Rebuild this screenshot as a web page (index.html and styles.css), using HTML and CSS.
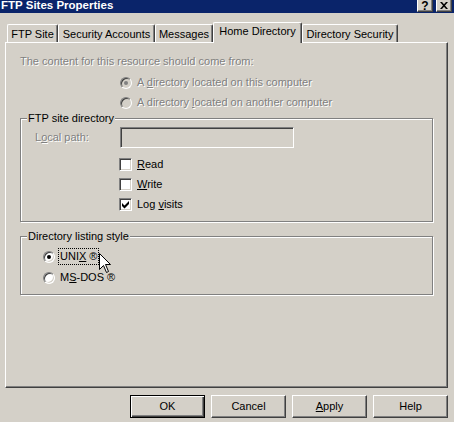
FILE: index.html
```html
<!DOCTYPE html>
<html>
<head>
<meta charset="utf-8">
<link rel="stylesheet" href="styles.css">
</head>
<body>
<div class="titlebar">
  <span class="title">FTP Sites Properties</span>
  <div class="caption-btns">
    <span class="cap-btn cap-help">?</span>
    <span class="cap-btn cap-close"><svg width="8" height="7" viewBox="0 0 8 7"><path d="M0 0h2l2 2.2L6 0h2L5 3.5 8 7H6L4 4.8 2 7H0l3-3.5z" fill="#000"/></svg></span>
  </div>
</div>

<div class="tabs">
  <div class="tab tab-ftp">FTP Site</div>
  <div class="tab tab-sec">Security Accounts</div>
  <div class="tab tab-msg">Messages</div>
  <div class="tab tab-home selected">Home Directory</div>
  <div class="tab tab-dirsec">Directory Security</div>
</div>

<div class="panel">
  <div class="intro disabled">The content for this resource should come from:</div>
  <div class="src-rows">
    <div class="opt-row src">
      <span class="radio radio-disabled checked"></span>
      <span class="opt-label disabled">A <u>d</u>irectory located on this computer</span>
    </div>
    <div class="opt-row src">
      <span class="radio radio-disabled"></span>
      <span class="opt-label disabled">A directory <u>l</u>ocated on another computer</span>
    </div>
  </div>

  <div class="group group-ftp">
    <div class="group-title">FTP site directory</div>
    <div class="path-row">
      <span class="path-label disabled">L<u>o</u>cal path:</span>
      <span class="textbox"></span>
    </div>
    <div class="checks">
      <div class="opt-row chk">
        <span class="checkbox"></span>
        <span class="opt-label"><u>R</u>ead</span>
      </div>
      <div class="opt-row chk">
        <span class="checkbox"></span>
        <span class="opt-label"><u>W</u>rite</span>
      </div>
      <div class="opt-row chk">
        <span class="checkbox"><svg width="7" height="8" viewBox="0 0 7 8"><path d="M0 2L2.5 4.5 7 0V3L2.5 7.5 0 5Z" fill="#000"/></svg></span>
        <span class="opt-label">Log <u>v</u>isits</span>
      </div>
    </div>
  </div>

  <div class="group group-list">
    <div class="group-title">Directory listing style</div>
    <div class="list-rows">
      <div class="opt-row lst">
        <span class="radio checked"></span>
        <span class="opt-label focus">UNI<u>X</u> ®</span>
      </div>
      <div class="opt-row lst">
        <span class="radio"></span>
        <span class="opt-label plain">M<u>S</u>-DOS ®</span>
      </div>
    </div>
  </div>
</div>

<div class="buttons">
  <div class="btn default"><span>OK</span></div>
  <div class="btn"><span>Cancel</span></div>
  <div class="btn"><span><u>A</u>pply</span></div>
  <div class="btn"><span>Help</span></div>
</div>

<svg class="cursor" width="13" height="21" viewBox="0 0 13 21"><path d="M0.5 0.5V16.5L4.5 12.5L7.5 19.5L9.5 18.5L6.5 11.5H11.5Z" fill="#fff" stroke="#000" stroke-width="1" stroke-linejoin="miter"/></svg>
</body>
</html>
```

FILE: styles.css
```css
html, body {
  margin: 0;
  padding: 0;
}
body {
  width: 454px;
  height: 422px;
  overflow: hidden;
  background: #d4d0c8;
  font-family: "Liberation Sans", Arial, sans-serif;
  font-size: 11px;
  line-height: 13px;
  color: #000;
  position: relative;
}

/* title bar */
.titlebar {
  height: 13px;
  background: #0a246a;
  display: flex;
  justify-content: space-between;
  align-items: flex-start;
  padding-right: 2px;
  overflow: hidden;
}
.title {
  color: #fff;
  font-weight: bold;
  font-size: 11.5px;
  line-height: 12px;
  padding-left: 1px;
  margin-top: -1px;
}
.caption-btns {
  display: flex;
  gap: 3px;
  margin-top: -2px;
}
.cap-btn {
  box-sizing: border-box;
  width: 16px;
  height: 14px;
  background: #d4d0c8;
  border-top: 1px solid #fff;
  border-left: 1px solid #fff;
  border-right: 1px solid #404040;
  border-bottom: 1px solid #404040;
  box-shadow: inset -1px -1px 0 #808080;
  display: flex;
  justify-content: center;
  align-items: center;
}
.cap-help {
  font-weight: bold;
  font-size: 12px;
  line-height: 12px;
  padding-top: 1px;
}
.cap-close svg {
  display: block;
  margin-top: 1px;
}

/* tabs */
.tabs {
  display: flex;
  align-items: flex-end;
  height: 20px;
  margin-top: 9px;
  padding-left: 7px;
}
.tab {
  box-sizing: border-box;
  height: 18px;
  border-top: 1px solid #fff;
  border-left: 1px solid #fff;
  border-right: 1px solid #404040;
  border-radius: 2px 2px 0 0;
  box-shadow: inset -1px 0 0 #808080;
  padding-top: 3px;
  text-align: center;
  white-space: nowrap;
}
.tab-ftp { width: 51px; }
.tab-sec { width: 97px; }
.tab-msg { width: 58px; }
.tab-home { width: 89px; }
.tab-dirsec { width: 96px; }
.tab.selected {
  height: 21px;
  margin-bottom: -1px;
  background: #d4d0c8;
  position: relative;
  z-index: 1;
  padding-top: 2px;
}

/* page */
.panel {
  box-sizing: border-box;
  width: 443px;
  height: 346px;
  margin-left: 5px;
  border-top: 1px solid #fff;
  border-left: 1px solid #fff;
  border-right: 1px solid #404040;
  border-bottom: 1px solid #404040;
  box-shadow: inset -1px -1px 0 #808080;
  padding: 12px 0 0 14px;
}

.disabled {
  color: #808080;
  text-shadow: 1px 1px 0 #fff;
}

.intro {
  height: 13px;
}
.src-rows {
  margin-top: 4px;
}
.opt-row {
  display: flex;
  align-items: flex-start;
  height: 20px;
}
.opt-row .opt-label {
  line-height: 20px;
  white-space: nowrap;
}
.src {
  margin-left: 100px;
}
.src .radio { margin-top: 5px; margin-right: 5px; }

/* radio */
.radio {
  box-sizing: border-box;
  width: 12px;
  height: 12px;
  flex: none;
  border-radius: 50%;
  border: 1px solid;
  border-color: #808080 #fff #fff #808080;
  box-shadow: inset 1px 1px 0 #404040, inset -1px -1px 0 #d4d0c8;
  background: #fff;
  display: flex;
  justify-content: center;
  align-items: center;
}
.radio.checked::after {
  content: "";
  width: 4px;
  height: 4px;
  border-radius: 50%;
  background: #000;
}
.radio-disabled {
  background: #d4d0c8;
}
.radio-disabled.checked::after {
  background: #808080;
}

/* group boxes */
.group {
  box-sizing: border-box;
  width: 413px;
  border: 1px solid #808080;
  box-shadow: inset 1px 1px 0 #fff, 1px 1px 0 #fff;
}
.group-title {
  width: fit-content;
  margin: -7px 0 0 6px;
  padding: 0 1px;
  background: #d4d0c8;
  line-height: 13px;
  white-space: nowrap;
}
.group-ftp {
  height: 104px;
  margin-top: 6px;
}
.group-list {
  height: 59px;
  margin-top: 14px;
}

.path-row {
  display: flex;
  align-items: flex-start;
  height: 21px;
  margin-top: 2px;
  padding-left: 14px;
}
.path-label {
  width: 85px;
  line-height: 21px;
}
.textbox {
  box-sizing: border-box;
  width: 174px;
  height: 21px;
  border: 1px solid;
  border-color: #808080 #fff #fff #808080;
  box-shadow: inset 1px 1px 0 #404040, inset -1px -1px 0 #d4d0c8;
  background: #d4d0c8;
}

.checks {
  margin-top: 6px;
  padding-left: 98px;
}
.checkbox {
  box-sizing: border-box;
  width: 13px;
  height: 13px;
  flex: none;
  margin-top: 4px;
  margin-right: 5px;
  border: 1px solid;
  border-color: #808080 #fff #fff #808080;
  box-shadow: inset 1px 1px 0 #404040, inset -1px -1px 0 #d4d0c8;
  background: #fff;
  display: flex;
  justify-content: center;
  align-items: center;
}
.checkbox svg {
  display: block;
  margin-top: 0px;
}

.list-rows {
  margin-top: 3px;
  padding-left: 22px;
}
.lst {
  height: 21px;
  align-items: center;
}
.lst .radio {
  margin-top: 0;
  margin-right: 3px;
}
.opt-label.focus {
  box-sizing: border-box;
  line-height: 15px;
  border: 1px dotted #000;
  padding: 0 1px 0 1px;
}
.opt-label.plain {
  line-height: 15px;
  padding: 1px 2px;
}

/* buttons */
.buttons {
  display: flex;
  justify-content: flex-end;
  gap: 6px;
  margin-top: 7px;
  padding-right: 6px;
}
.btn {
  box-sizing: border-box;
  width: 75px;
  height: 23px;
  border-top: 1px solid #fff;
  border-left: 1px solid #fff;
  border-right: 1px solid #404040;
  border-bottom: 1px solid #404040;
  box-shadow: inset -1px -1px 0 #808080;
  text-align: center;
  line-height: 20px;
}
.btn.default {
  border: 1px solid #000;
  box-shadow: inset 1px 1px 0 #fff, inset -1px -1px 0 #404040, inset -2px -2px 0 #808080;
}

/* mouse pointer over the dialog */
.cursor {
  position: absolute;
  left: 99px;
  top: 253px;
}
```
